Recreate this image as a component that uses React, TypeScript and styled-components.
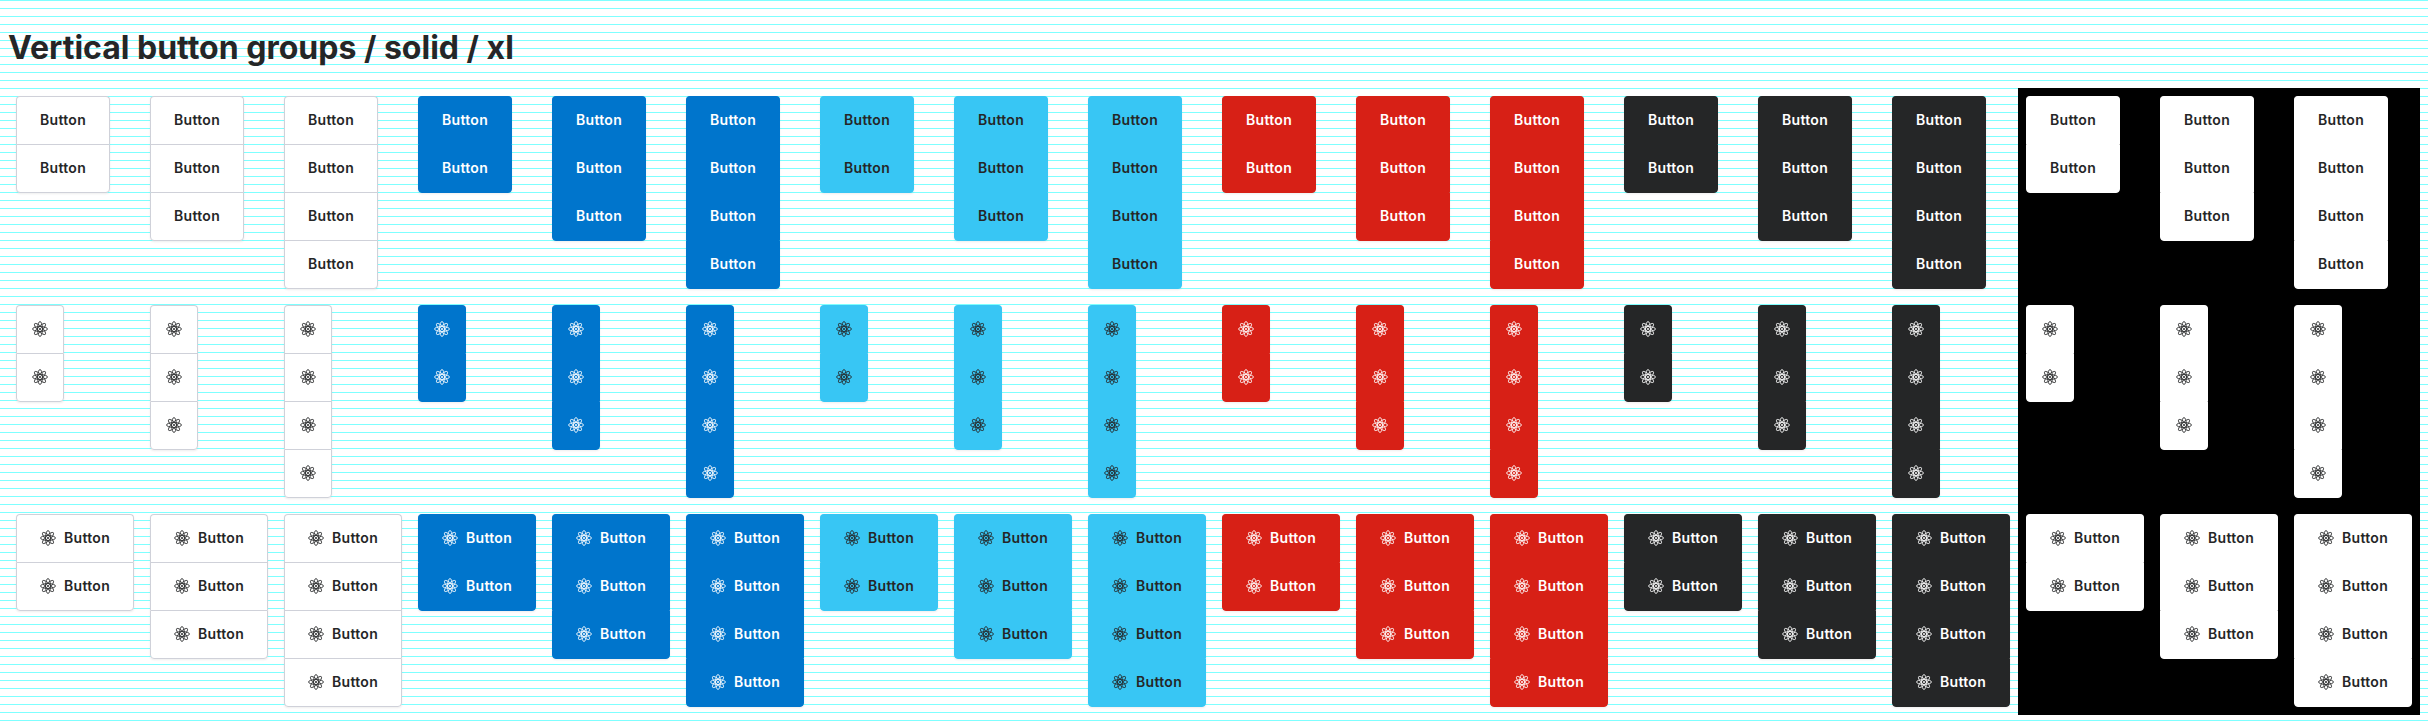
import React from "react";
import styled, { createGlobalStyle } from "styled-components";

const GlobalStyle = createGlobalStyle`
  *, *::before, *::after { box-sizing: border-box; }
  html { background: #fff; }
  body {
    margin: 0;
    font-family: Inter, "Liberation Sans", sans-serif;
    color: #252627;
  }
`;

const Page = styled.main`
  width: 2428px;
  height: 723px;
  padding: 8px;
  overflow: hidden;
  background: repeating-linear-gradient(to bottom, #7fffff 0, #7fffff 1px, #fff 1px, #fff 8px);
`;

const Title = styled.h1`
  margin: 0;
  height: 80px;
  font-size: 32px;
  font-weight: 700;
  line-height: 80px;
  white-space: nowrap;
`;

const Board = styled.div`
  display: flex;
`;

const Section = styled.section<{ $backdrop: string }>`
  display: grid;
  grid-template-columns: repeat(3, 134px);
  grid-auto-rows: 209px;
  background: ${(p) => p.$backdrop};
`;

const Cell = styled.div`
  display: flex;
  align-items: flex-start;
  padding: 8px;
`;

type Tone = { bg: string; fg: string; border: string; backdrop: string };
type Kind = "text" | "icon" | "both";

const Group = styled.div`
  display: flex;
  flex-direction: column;
  flex: none;
  border-radius: 4px;
  box-shadow: 0 1px 2px rgba(37, 38, 39, 0.08);
`;

const widths: Record<Kind, number> = { text: 94, icon: 48, both: 118 };

const GroupButton = styled.button<{ $tone: Tone; $kind: Kind }>`
  display: flex;
  align-items: center;
  gap: 8px;
  width: ${(p) => widths[p.$kind]}px;
  height: 48px;
  margin: 0;
  padding: 0 0 1px ${(p) => (p.$kind === "icon" ? 15 : 23)}px;
  border: 1px solid ${(p) => p.$tone.border};
  border-bottom: 0;
  background: ${(p) => p.$tone.bg};
  color: ${(p) => p.$tone.fg};
  font: 600 14px/20px Inter, "Liberation Sans", sans-serif;
  letter-spacing: 0.3px;

  &:first-child {
    border-radius: 4px 4px 0 0;
  }
  &:last-child {
    height: 49px;
    border-bottom: 1px solid ${(p) => p.$tone.border};
    border-radius: 0 0 4px 4px;
  }
`;

const Icon = styled.svg`
  display: block;
  flex: none;
  width: 16px;
  height: 16px;
`;

function Atom() {
  return (
    <Icon viewBox="0 0 16 16" fill="none" stroke="currentColor" strokeWidth="0.85">
      {[0, 45, 90, 135].map((angle) => (
        <ellipse key={angle} cx="8" cy="8" rx="7.5" ry="2.4" transform={`rotate(${angle} 8 8)`} />
      ))}
      <circle cx="8" cy="8" r="1" fill="currentColor" stroke="none" />
    </Icon>
  );
}

const kinds: Kind[] = ["text", "icon", "both"];
const sizes = [2, 3, 4];

const tones: Tone[] = [
  { bg: "#fff", fg: "#252627", border: "#cfd1d9", backdrop: "transparent" },
  { bg: "#0075cc", fg: "#fff", border: "#0075cc", backdrop: "transparent" },
  { bg: "#38c6f4", fg: "#252627", border: "#38c6f4", backdrop: "transparent" },
  { bg: "#d72016", fg: "#fff", border: "#d72016", backdrop: "transparent" },
  { bg: "#252627", fg: "#fff", border: "#252627", backdrop: "transparent" },
  { bg: "#fff", fg: "#252627", border: "#fff", backdrop: "#000" },
];

export default function App() {
  return (
    <Page>
      <GlobalStyle />
      <Title>Vertical button groups / solid / xl</Title>
      <Board>
        {tones.map((tone, t) => (
          <Section key={t} $backdrop={tone.backdrop}>
            {kinds.map((kind) =>
              sizes.map((count) => (
                <Cell key={kind + count}>
                  <Group>
                    {Array.from({ length: count }, (_, i) => (
                      <GroupButton key={i} $tone={tone} $kind={kind}>
                        {kind !== "text" && <Atom />}
                        {kind !== "icon" && <span>Button</span>}
                      </GroupButton>
                    ))}
                  </Group>
                </Cell>
              ))
            )}
          </Section>
        ))}
      </Board>
    </Page>
  );
}
